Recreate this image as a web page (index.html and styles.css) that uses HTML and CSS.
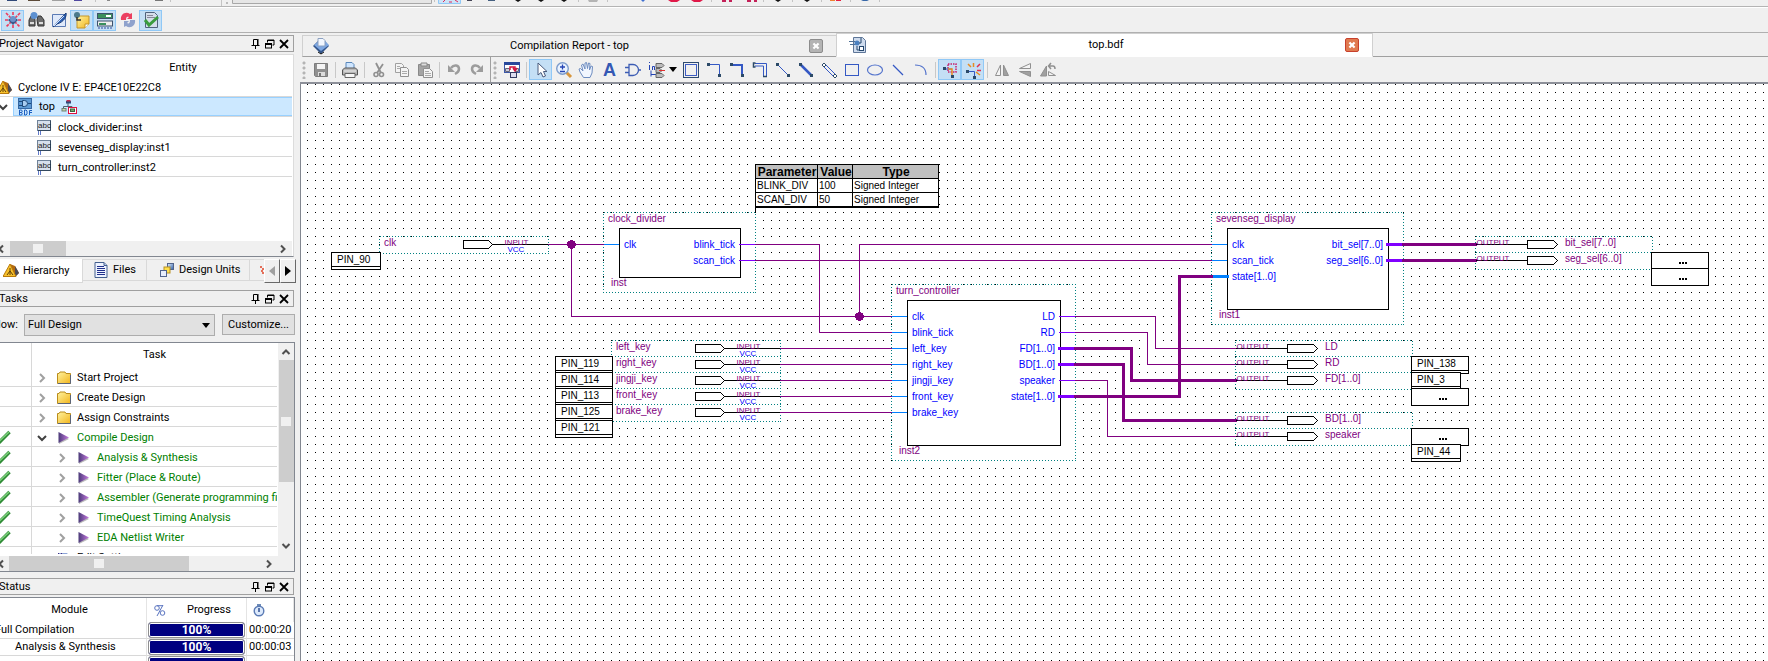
FILE: index.html
```
<!DOCTYPE html>
<html lang="en">
<head>
<meta charset="utf-8">
<title>top.bdf</title>
<link rel="stylesheet" href="styles.css">
</head>
<body>
<svg class="defs" aria-hidden="true">
  <defs>
    <linearGradient id="gold" x1="0" y1="0" x2="1" y2="1"><stop offset="0" stop-color="#fff3a0"/><stop offset="1" stop-color="#f2b51c"/></linearGradient>
    <linearGradient id="violet" x1="0" y1="0" x2="1" y2="0"><stop offset="0" stop-color="#4a3a78"/><stop offset="1" stop-color="#c77be0"/></linearGradient>
    <linearGradient id="steel" x1="0" y1="0" x2="1" y2="1"><stop offset="0" stop-color="#e4f0ff"/><stop offset="1" stop-color="#2f5fa8"/></linearGradient>
  </defs>
  <symbol id="i-folder" viewBox="0 0 16 16"><path d="M1.500 13.500V3.500H3L4 2h5l1 1.500h4.500v10z" fill="url(#gold)" stroke="#b98c1c"/><path d="M2 13.500h12.500V5" fill="none" stroke="#5b6478"/></symbol>
  <symbol id="i-play" viewBox="0 0 16 16"><path d="M3 3v11l10-5z" fill="#bbb"/><path d="M2.500 2v11L13 7.500z" fill="url(#violet)"/></symbol>
  <symbol id="i-check" viewBox="0 0 16 16"><path d="M1 9l4 3.500L14.500 3" fill="none" stroke="#2f8a35" stroke-width="3.500"/><path d="M1.500 8.500l3.500 3L14 3" fill="none" stroke="#7cd07c" stroke-width="1.500"/></symbol>
  <symbol id="i-closed" viewBox="0 0 10 10"><path d="M3 1l4 4-4 4" fill="none" stroke="#a0a0a0" stroke-width="2"/></symbol>
  <symbol id="i-open" viewBox="0 0 10 10"><path d="M1 3l4 4 4-4" fill="none" stroke="#404040" stroke-width="2"/></symbol>
  <symbol id="i-left" viewBox="0 0 10 10"><path d="M7 1.500L3.500 5 7 8.500" fill="none" stroke="#505050" stroke-width="2"/></symbol>
  <symbol id="i-right" viewBox="0 0 10 10"><path d="M3 1.500L6.500 5 3 8.500" fill="none" stroke="#505050" stroke-width="2"/></symbol>
  <symbol id="i-up" viewBox="0 0 10 10"><path d="M1.500 7L5 3.500 8.500 7" fill="none" stroke="#505050" stroke-width="2"/></symbol>
  <symbol id="i-down" viewBox="0 0 10 10"><path d="M1.500 3L5 6.500 8.500 3" fill="none" stroke="#505050" stroke-width="2"/></symbol>
  <symbol id="i-device" viewBox="0 0 16 16"><path d="M7 1l5 2 4 7-4 4z" fill="#b36a10"/><path d="M12 3l4 7-4 4z" fill="#4a4a58"/><path d="M7 1l6 12.500H0z" fill="#f7c12c" stroke="#b87a0c"/><path d="M7 5v7M7 8l-3 4M7 8l3 4" stroke="#604008" fill="none"/></symbol>
  <symbol id="i-bdf" viewBox="0 0 16 18"><rect x="1.500" y=".5" width="13" height="10" fill="#5d9ad4" stroke="#3568a4"/><path d="M2 3.500h3M2 7.500h3M11 5.500h3M5.500 2.500h2a3 3 0 0 1 0 6h-2z" fill="#a9cdf0" stroke="#1d4878"/><path d="M2.500 12v5h1.500a1.200 1.200 0 0 0 0-2.500H3h1a1.200 1.200 0 0 0 0-2.500zM7.500 12v5H9l1-1v-3l-1-1zM15 12.500h-2.500V17M12.500 14.500H15" fill="none" stroke="#1c5fc0"/></symbol>
  <symbol id="i-tree" viewBox="0 0 16 16"><path d="M7 4v3M2.500 10V7.500H11V10" fill="none" stroke="#506070"/><rect x="5" y="2" width="5" height="2.500" fill="#304878"/><rect x="5.500" y="1" width="4" height="1.500" fill="#c03050"/><rect x="1" y="9.500" width="4" height="2.500" fill="#c8d8b0" stroke="#708070"/><rect x="7.500" y="8.500" width="8" height="6" fill="#fff" stroke="#e01040"/><rect x="9.500" y="10" width="4" height="2.500" fill="#70b070" stroke="#406040"/></symbol>
  <symbol id="i-abc" viewBox="0 0 16 18"><rect x="1.500" y="1.500" width="13" height="10" fill="#d7e0ec" stroke="#6f8298"/><path d="M14.500 1.500v10H2" fill="none" stroke="#33485e"/><text x="2" y="9" class="abc">abc</text><path d="M2.500 12v4M4.500 12v4" stroke="#6078c8"/></symbol>
  <symbol id="i-doc" viewBox="0 0 16 16"><path d="M2 .5h9l3 3v12H2z" fill="#eef3ff" stroke="#44608f"/><path d="M4 4.500h7M4 6.500h8M4 8.500h8M4 10.500h8M4 12.500h8" stroke="#20308c"/><path d="M11 .5v3h3" fill="#b7c7e6" stroke="#44608f"/></symbol>
  <symbol id="i-units" viewBox="0 0 16 16"><rect x="8.500" y="1.500" width="6" height="6" fill="url(#steel)" stroke="#52648c"/><rect x="5" y="5" width="6" height="6" fill="#ffe04c" stroke="#b89020"/><rect x="1.500" y="8.500" width="6" height="6" fill="#e8eefc" stroke="#52648c"/></symbol>
  <symbol id="i-ip" viewBox="0 0 4 8"><path d="M0 1h2M2 3h2M1 5h2M2 7h2" stroke="#e04428" stroke-width="1.500"/></symbol>
  <symbol id="i-pin" viewBox="0 0 10 10"><path d="M2.500 6V.5h4V6M7 0v6M.5 6.500h8M4.500 7v3" fill="none" stroke="#000"/></symbol>
  <symbol id="i-float" viewBox="0 0 10 10"><path d="M2.500 3.500V1h6.500v5H7.500M2.500 1.500H9" fill="none" stroke="#000"/><rect x=".5" y="4.500" width="6" height="4.500" fill="#f0f0f0" stroke="#000"/><path d="M0 5h7" stroke="#000" stroke-width="2"/></symbol>
  <symbol id="i-x" viewBox="0 0 10 10"><path d="M1 1l8 8M9 1L1 9" fill="none" stroke="#000" stroke-width="1.800"/></symbol>
  <symbol id="i-clock" viewBox="0 0 12 14"><path d="M4 1h4v2H4z" fill="#6f8cb8"/><circle cx="6" cy="8" r="4.800" fill="#dce9fb" stroke="#5a7ab4" stroke-width="1.400"/><path d="M6 5v4" stroke="#2c4c90" stroke-width="1.500"/></symbol>
  <symbol id="i-percent" viewBox="0 0 14 14"><path d="M10 2L4 13" stroke="#5a74c0" fill="none"/><circle cx="4" cy="5" r="2.300" fill="none" stroke="#5a74c0"/><circle cx="9.500" cy="10" r="2.300" fill="none" stroke="#5a74c0"/><path d="M4 2.700h6" stroke="#5a74c0"/></symbol>
</svg>

<div class="strip" aria-hidden="true">
  <svg width="800" height="6" viewBox="0 0 800 6">
    <path d="M221.500 0v6M95.500 0v2M170.500 0v2M434.500 0v2M578.500 0v2M607.500 0v2M711.500 0v2M763.500 0v2M792.500 0v2" stroke="#c4c4c4"/>
    <rect x="7" width="10" height="1" fill="#304878"/><rect x="28" width="12" height="1" fill="#5c4a38"/><rect x="52" width="13" height="1" fill="#a0a0a0"/><rect x="74" width="8" height="1" fill="#5048a0"/><rect x="107" width="3" height="1" fill="#888"/><rect x="155" width="8" height="1" fill="#777"/><rect x="226" y="2" width="2" height="2" fill="#bbb"/>
    <path d="M232.500 0v3.500h199V0" fill="#e6e6e6" stroke="#a8a8a8"/>
    <path d="M438.500 0v3.500h22V0" fill="#cce4f7" stroke="#90c8f6"/>
    <path d="M443 2l2-2M455 0l3 2M449 2h3" stroke="#e02858"/>
    <rect x="467" width="5" height="1" fill="#445"/><rect x="488" width="7" height="1" fill="#456080"/>
    <path d="M515 0h6l-3 2zM538 0h6l-3 2zM561 0h6l-3 2zM775 0h6l-3 2z" fill="#111"/>
    <path d="M588 0h10l-1 2h-8z" fill="#b4b4b4"/><path d="M641 0h4l-2 2z" fill="#4070d0"/><path d="M668 0h12l-3 2h-6zM691 0h12l-3 2h-6z" fill="#e01848"/>
    <path d="M722 0h4v2h-4zM729 0h3v2h-3zM747 0h4v2h-4zM754 0h3v2h-3z" fill="#c42058"/>
  </svg>
  <svg width="100" height="6" viewBox="0 0 100 6"><path d="M4 0h6L7 2z" fill="#111"/><path d="M21.500 0v2M50.500 0v2M79.500 0v2" stroke="#c4c4c4"/><path d="M30 0h5v1h-5z" fill="#f08030"/><path d="M36 0h5v1h-5z" fill="#e82040"/><path d="M61 0h8l-2 1h-4z" fill="#3868a8"/></svg>
</div>

<div class="quickbar" role="toolbar" aria-label="Tools">
  <button class="tool on" aria-label="Chip planner"><svg width="18" height="18" viewBox="0 0 18 18"><path d="M2 2l14 14M16 2L2 16M9 1v3M9 14v3M1 9h3M14 9h3" stroke="#ee3a5c" stroke-width="1.600" stroke-dasharray="3 1"/><path d="M4 9l5-4 5 4-5 5z" fill="#39598c"/><circle cx="9" cy="8" r="3" fill="#6d93cc"/></svg></button>
  <button class="tool" aria-label="Find"><svg width="18" height="18" viewBox="0 0 18 18"><path d="M2 9l2-4h3l1 4v6H2zM10 9l1-4h3l3 4v6h-6z" fill="#6c6c6c" stroke="#333"/><path d="M3 12h4M12 12h4" stroke="#ddd" stroke-width="2"/><circle cx="7" cy="4.500" r="3.500" fill="#5d90d0"/></svg></button>
  <button class="tool" aria-label="Assignment editor"><svg width="18" height="18" viewBox="0 0 18 18"><path d="M2.500 3.500h13v12h-13z" fill="#dfe9fa" stroke="#5a7ab4"/><path d="M3 16L16 2c1 3-2 9-9 11z" fill="#2e62b4" stroke="#1c3d78"/><path d="M4 15L14 5" stroke="#cfe2ff"/></svg></button>
  <button class="tool on" aria-label="Notes"><svg width="18" height="18" viewBox="0 0 18 18"><path d="M4 5h12v8l-4 4H4z" fill="url(#gold)" stroke="#c2952a"/><path d="M16 13h-4v4" fill="#fff" stroke="#c2952a"/><circle cx="4" cy="4" r="3" fill="#4a7a8c"/><path d="M4 6v3h4" fill="none" stroke="#333" stroke-width="1.500"/></svg></button>
  <button class="tool on" aria-label="Tasks"><svg width="18" height="18" viewBox="0 0 18 18"><rect x="1.500" y="2.500" width="15" height="5" fill="#3a8f5c" stroke="#3c506c"/><rect x="1.500" y="10" width="15" height="5" fill="#eee" stroke="#3c506c"/><path d="M10 4h5v2h-5z" fill="#fff"/><path d="M3 12h7v2H3z" fill="#3a8f5c"/><path d="M2 17h14" stroke="#334a9c" stroke-dasharray="2 1"/></svg></button>
  <button class="tool" aria-label="Refresh"><svg width="18" height="18" viewBox="0 0 18 18"><path d="M2 9c-1-6 5-9 9-6l2-1v6H8l2-2C8 5 7 6 7 9z" fill="#ec4060"/><path d="M16 9c1 6-5 9-9 6l-2 1v-6h5l-2 2c2 1 3 0 3-3z" fill="#8fa2cc"/></svg></button>
  <button class="tool on" aria-label="Messages"><svg width="18" height="18" viewBox="0 0 18 18"><path d="M3.500 1.500h9l3 3v12h-12z" fill="#d4deea" stroke="#50627c"/><path d="M5 4.500h6M5 6.500h8" stroke="#889"/><path d="M3 9l4 5 9-8" fill="none" stroke="#3a9c3e" stroke-width="3"/></svg></button>
</div>

<main class="main">
  <aside class="side">
    <div class="dock-title"><span>Project Navigator</span><span class="dock-icons"><svg><use href="#i-pin"/></svg><svg><use href="#i-float"/></svg><svg><use href="#i-x"/></svg></span></div>
    <section class="nav-pane">
      <div class="nav-head">Entity</div>
      <ul class="nav-list">
        <li><svg class="ic dev"><use href="#i-device"/></svg>Cyclone IV E: EP4CE10E22C8</li>
        <li class="top-row"><svg class="chev"><use href="#i-open"/></svg><div class="picked"><svg class="ic tall"><use href="#i-bdf"/></svg><span>top</span><svg class="ic"><use href="#i-tree"/></svg></div></li>
        <li class="leaf"><svg class="ic tall"><use href="#i-abc"/></svg>clock_divider:inst</li>
        <li class="leaf"><svg class="ic tall"><use href="#i-abc"/></svg>sevenseg_display:inst1</li>
        <li class="leaf"><svg class="ic tall"><use href="#i-abc"/></svg>turn_controller:inst2</li>
      </ul>
      <div class="hscroll nav-scroll"><svg><use href="#i-left"/></svg><i class="thumb"><b></b></i><svg class="end"><use href="#i-right"/></svg></div>
    </section>
    <div class="nav-tabs">
      <button class="nav-tab current"><svg class="ic"><use href="#i-device"/></svg>Hierarchy</button>
      <button class="nav-tab files"><svg class="ic"><use href="#i-doc"/></svg>Files</button>
      <button class="nav-tab units"><svg class="ic"><use href="#i-units"/></svg>Design Units</button>
      <span class="nav-tab cut"><svg width="4" height="8"><use href="#i-ip"/></svg></span>
      <button class="nudge" aria-label="Previous tab"><svg width="6" height="10" viewBox="0 0 6 10"><path d="M6 0v10L0 5z" fill="#a0a0a0"/></svg></button>
      <button class="nudge" aria-label="Next tab"><svg width="6" height="10" viewBox="0 0 6 10"><path d="M0 0v10l6-5z" fill="#000"/></svg></button>
    </div>

    <div class="dock-title"><span>Tasks</span><span class="dock-icons"><svg><use href="#i-pin"/></svg><svg><use href="#i-float"/></svg><svg><use href="#i-x"/></svg></span></div>
    <div class="flow-row">
      <label for="flow">Flow:</label>
      <span class="combo"><select id="flow"><option>Full Design</option></select><svg width="8" height="5" viewBox="0 0 8 5"><path d="M0 0h8L4 5z"/></svg></span>
      <button class="customize">Customize...</button>
    </div>
    <section class="task-pane">
      <div class="task-view">
        <table class="tasks">
          <thead><tr><th class="mark"></th><th>Task</th></tr></thead>
          <tbody>
            <tr><td class="mark"></td><td><div class="task"><svg class="chev"><use href="#i-closed"/></svg><svg class="ic"><use href="#i-folder"/></svg>Start Project</div></td></tr>
            <tr><td class="mark"></td><td><div class="task"><svg class="chev"><use href="#i-closed"/></svg><svg class="ic"><use href="#i-folder"/></svg>Create Design</div></td></tr>
            <tr><td class="mark"></td><td><div class="task"><svg class="chev"><use href="#i-closed"/></svg><svg class="ic"><use href="#i-folder"/></svg>Assign Constraints</div></td></tr>
            <tr class="done"><td class="mark"><svg class="ic"><use href="#i-check"/></svg></td><td><div class="task"><svg class="chev"><use href="#i-open"/></svg><svg class="ic"><use href="#i-play"/></svg>Compile Design</div></td></tr>
            <tr class="done"><td class="mark"><svg class="ic"><use href="#i-check"/></svg></td><td><div class="task sub"><svg class="chev"><use href="#i-closed"/></svg><svg class="ic"><use href="#i-play"/></svg>Analysis &amp; Synthesis</div></td></tr>
            <tr class="done"><td class="mark"><svg class="ic"><use href="#i-check"/></svg></td><td><div class="task sub"><svg class="chev"><use href="#i-closed"/></svg><svg class="ic"><use href="#i-play"/></svg>Fitter (Place &amp; Route)</div></td></tr>
            <tr class="done"><td class="mark"><svg class="ic"><use href="#i-check"/></svg></td><td><div class="task sub"><svg class="chev"><use href="#i-closed"/></svg><svg class="ic"><use href="#i-play"/></svg>Assembler (Generate programming files)</div></td></tr>
            <tr class="done"><td class="mark"><svg class="ic"><use href="#i-check"/></svg></td><td><div class="task sub"><svg class="chev"><use href="#i-closed"/></svg><svg class="ic"><use href="#i-play"/></svg>TimeQuest Timing Analysis</div></td></tr>
            <tr class="done"><td class="mark"><svg class="ic"><use href="#i-check"/></svg></td><td><div class="task sub"><svg class="chev"><use href="#i-closed"/></svg><svg class="ic"><use href="#i-play"/></svg>EDA Netlist Writer</div></td></tr>
            <tr><td class="mark"></td><td><div class="task edit"><svg class="ic" viewBox="0 0 16 16"><path d="M2 3h9l4 5v8H2z" fill="#8ea6d8"/><path d="M2.500 3v9M5.500 3v9M8.500 4l3 8" stroke="#402c80"/></svg>Edit Settings</div></td></tr>
          </tbody>
        </table>
      </div>
      <div class="vscroll"><svg><use href="#i-up"/></svg><i class="thumb"><b></b></i><svg class="end"><use href="#i-down"/></svg></div>
      <div class="hscroll task-scroll"><svg><use href="#i-left"/></svg><i class="thumb"><b></b></i><svg class="end"><use href="#i-right"/></svg></div>
    </section>

    <div class="dock-title"><span>Status</span><span class="dock-icons"><svg><use href="#i-pin"/></svg><svg><use href="#i-float"/></svg><svg><use href="#i-x"/></svg></span></div>
    <section class="status-pane">
      <table class="status">
        <thead><tr><th class="module">Module</th><th class="progress"><div><svg width="14" height="14"><use href="#i-percent"/></svg><span>Progress</span></div></th><th class="time"><div><svg width="12" height="14"><use href="#i-clock"/></svg></div></th></tr></thead>
        <tbody>
          <tr><td>Full Compilation</td><td class="progress"><div class="bar">100%</div></td><td>00:00:20</td></tr>
          <tr><td class="inner">Analysis &amp; Synthesis</td><td class="progress"><div class="bar">100%</div></td><td>00:00:03</td></tr>
          <tr><td></td><td class="progress"><div class="bar"></div></td><td></td></tr>
        </tbody>
      </table>
    </section>
  </aside>

  <section class="work">
    <div class="doc-tabs" role="tablist">
      <div class="doc-tab" role="tab"><svg class="doc-ic" viewBox="0 0 18 18"><path d="M9 17L1 9l5-5h7l4 5z" fill="#34568c"/><path d="M9 14L2 8l5-4h6l4 4z" fill="#7da7e2"/><path d="M6 1.500h5l2 2V9H6z" fill="#f2f7ff" stroke="#8ba0c0"/><path d="M6 15l3 2 3-2" stroke="#111" fill="none"/></svg><span>Compilation Report - top</span><button class="close" aria-label="Close"><svg viewBox="0 0 14 14"><path d="M4 4l6 6M10 4l-6 6" stroke="#fff" stroke-width="2.500"/></svg></button></div>
      <div class="doc-tab active" role="tab"><svg class="doc-ic" viewBox="0 0 18 18"><path d="M4.500 1.500h9l3 3v12h-12z" fill="#cfdcee" stroke="#5e7698"/><path d="M0 5.500h6M1 8.500h5" stroke="#4e7096"/><circle cx="8" cy="7" r="2.500" fill="#4a80c0"/><path d="M10 7h2V2M8 10v4h3" fill="none" stroke="#24466c"/><rect x="10.500" y="10.500" width="4" height="4" fill="#fff" stroke="#24466c"/></svg><span>top.bdf</span><button class="close" aria-label="Close"><svg viewBox="0 0 14 14"><path d="M4 4l6 6M10 4l-6 6" stroke="#fff" stroke-width="2.500"/></svg></button></div>
      <div class="doc-rest"></div>
    </div>

    <div class="editbar" role="toolbar" aria-label="Drawing tools">
      <i class="grip"></i>
      <button class="tool" aria-label="Save"><svg width="16" height="16" viewBox="0 0 16 16"><path d="M1.500 1.500h13v13h-12l-1-1z" fill="#909090" stroke="#7c7c7c"/><path d="M4 2h8v5H4z" fill="#f4f4f4"/><path d="M5 10h7v4H5z" fill="#ddd"/><path d="M6 11h2v3H6z" fill="#777"/></svg></button>
      <i class="sep"></i>
      <button class="tool" aria-label="Print"><svg width="18" height="18" viewBox="0 0 18 18"><path d="M5 8V1.500h6l2 2V8" fill="#cfe6ff" stroke="#5a88bc"/><path d="M1.500 9l2-2h11l2 2v5h-15z" fill="#b8b8b8" stroke="#555"/><path d="M4 12.500h10v4H4z" fill="#f6f6f6" stroke="#666"/><path d="M3 10h12" stroke="#eee"/></svg></button>
      <i class="sep"></i>
      <button class="tool" aria-label="Cut"><svg width="16" height="16" viewBox="0 0 16 16"><path d="M5 1l5 10M12 2L6 11" stroke="#909090" stroke-width="1.800"/><circle cx="5" cy="12.500" r="2" fill="none" stroke="#909090" stroke-width="1.600"/><circle cx="10.500" cy="12.500" r="2" fill="none" stroke="#909090" stroke-width="1.600"/></svg></button>
      <button class="tool" aria-label="Copy"><svg width="16" height="16" viewBox="0 0 16 16"><path d="M1.500 1.500h6l2 2v7h-8z" fill="#f4f4f4" stroke="#a0a0a0"/><path d="M6.500 5.500h6l2 2v7h-8z" fill="#f4f4f4" stroke="#909090"/><path d="M3 4.500h3M3 6.500h3M8 9.500h5M8 11.500h5" stroke="#aaa"/></svg></button>
      <button class="tool" aria-label="Paste"><svg width="16" height="16" viewBox="0 0 16 16"><path d="M1.500 2.500h11v11h-11z" fill="#a4a4a4" stroke="#888"/><path d="M4 1h6v3H4z" fill="#ddd" stroke="#888"/><path d="M6.500 6.500h6l3 3v6h-9z" fill="#f4f4f4" stroke="#909090"/><path d="M8 9.500h4M8 11.500h6M8 13.500h6" stroke="#aaa"/></svg></button>
      <i class="sep"></i>
      <button class="tool" aria-label="Undo"><svg width="16" height="16" viewBox="0 0 16 16"><path d="M5 6c3-4 8-3 8 1 0 3-2 4-4 5" fill="none" stroke="#9c9c9c" stroke-width="2.500"/><path d="M2 3v7h7z" fill="#9c9c9c"/></svg></button>
      <button class="tool" aria-label="Redo"><svg width="16" height="16" viewBox="0 0 16 16"><path d="M11 6C8 2 3 3 3 7c0 3 2 4 4 5" fill="none" stroke="#9c9c9c" stroke-width="2.500"/><path d="M14 3v7H7z" fill="#9c9c9c"/></svg></button>
      <i class="divider"></i>
      <i class="grip"></i>
      <button class="tool" aria-label="Detach window"><svg width="18" height="18" viewBox="0 0 18 18"><rect x="1.500" y="1.500" width="15" height="10" fill="#fff" stroke="#3c58a8"/><path d="M1 2.500h16" stroke="#28489c" stroke-width="3"/><path d="M2.500 7.500h4v3h-4zM12.500 7.500h3v3h-3z" fill="#ccd" stroke="#667"/><path d="M7 9V6h5v3M10 7l2 3 2-3" fill="none" stroke="#d01840" stroke-width="1.500"/><rect x="7.500" y="11.500" width="6" height="5" fill="#dde" stroke="#333a60"/></svg></button>
      <i class="sep"></i>
      <button class="tool on" aria-label="Select"><svg width="16" height="18" viewBox="0 0 16 18"><path d="M5 2v12l3-2.500 2 4.500 2.500-1-2-4.500H14z" fill="#fff" stroke="#4a5a7c"/></svg></button>
      <button class="tool" aria-label="Zoom"><svg width="18" height="18" viewBox="0 0 18 18"><path d="M11 11l5 5" stroke="#d8963c" stroke-width="3"/><circle cx="7.500" cy="7.500" r="5.800" fill="#eaf3ff" stroke="#7c9ccc" stroke-width="1.400"/><path d="M7.500 3.500v5M5 6h5M5 10.500h5" stroke="#2444b4" stroke-width="1.300"/></svg></button>
      <button class="tool" aria-label="Hand"><svg width="18" height="18" viewBox="0 0 18 18"><path d="M5.500 16.500L2 11 1 8l1.500-.5L5 10 3.500 4l1.500-1 2 5V2l1.500-.5 1 6 1-5.500 1.500.5-.5 6.500L13 5l1.500.5L14 12l-2 4.500z" fill="#f1f6ff" stroke="#6d8cc0"/></svg></button>
      <button class="tool glyph" aria-label="Text">A</button>
      <button class="tool" aria-label="Symbol"><svg width="18" height="18" viewBox="0 0 18 18"><path d="M1 6.500h4M1 11.500h4M14 9h3M5 3.500h4a5.500 5.500 0 0 1 0 11H5z" fill="none" stroke="#3c5cb4" stroke-width="1.300"/></svg></button>
      <button class="tool" aria-label="Pins"><svg width="18" height="18" viewBox="0 0 18 18"><path d="M2.500 4v5M5.500 9V5.500h2V9M2.500 1v1M4 13.500h6M4 9.500v6" fill="none" stroke="#2444b4"/><path d="M9 2.500h6l2 2-2 2H9zM9 7.500h4l2 2-2 2H9zM9 12.500h6l2 2-2 2H9z" fill="#bbb" stroke="#666"/><path d="M12 9.500h6" stroke="#e03030"/></svg></button>
      <button class="more" aria-label="More pins"><svg width="8" height="5" viewBox="0 0 8 5"><path d="M0 0h8L4 5z"/></svg></button>
      <button class="tool" aria-label="Block"><svg width="18" height="18" viewBox="0 0 18 18"><rect x="1.500" y="1.500" width="15" height="15" fill="none" stroke="#2c4a70"/><rect x="3.500" y="3.500" width="11" height="11" fill="none" stroke="#3c5cc4"/></svg></button>
      <button class="tool" aria-label="Node"><svg width="18" height="18" viewBox="0 0 18 18"><path d="M3 3.500h11.500V15" fill="none" stroke="#3458c4"/><path d="M2 2h3v3H2zM13 13h3v3h-3z" fill="#2c4a68"/></svg></button>
      <button class="tool" aria-label="Bus"><svg width="18" height="18" viewBox="0 0 18 18"><path d="M3 4h11v11" fill="none" stroke="#3458c4" stroke-width="2"/><path d="M2 2h3v3H2zM13 13h3v3h-3z" fill="#2c4a68"/></svg></button>
      <button class="tool" aria-label="Conduit"><svg width="18" height="18" viewBox="0 0 18 18"><path d="M4 2.500h11.500V15M4 5h8.500v10" fill="none" stroke="#3458c4"/><path d="M4.500 2h-2v4h2M12 15.500h4" fill="none" stroke="#2c4a68" stroke-width="1.500"/></svg></button>
      <button class="tool" aria-label="Diagonal node"><svg width="18" height="18" viewBox="0 0 18 18"><path d="M3 3l12 12" stroke="#3458c4"/><path d="M2 2h3v3H2zM13 13h3v3h-3z" fill="#2c4a68"/></svg></button>
      <button class="tool" aria-label="Diagonal bus"><svg width="18" height="18" viewBox="0 0 18 18"><path d="M3 3l12 12" stroke="#3458c4" stroke-width="2.500"/><path d="M2 2h3v3H2zM13 13h3v3h-3z" fill="#2c4a68"/></svg></button>
      <button class="tool" aria-label="Diagonal conduit"><svg width="18" height="18" viewBox="0 0 18 18"><path d="M3 5l11 11M5 3l11 11" stroke="#3458c4"/><path d="M2 4l2-2 2 2-2 2zM13 15l2-2 2 2-2 2z" fill="#fff" stroke="#2c4a68"/></svg></button>
      <button class="tool" aria-label="Rectangle"><svg width="18" height="18" viewBox="0 0 18 18"><rect x="2.500" y="3.500" width="13" height="11" fill="none" stroke="#3458c4"/></svg></button>
      <button class="tool" aria-label="Oval"><svg width="18" height="18" viewBox="0 0 18 18"><ellipse cx="9" cy="9" rx="7.500" ry="5" fill="none" stroke="#5474cc" stroke-width="1.200"/></svg></button>
      <button class="tool" aria-label="Line"><svg width="18" height="18" viewBox="0 0 18 18"><path d="M4 4l10 10" stroke="#3458c4" stroke-width="1.300"/></svg></button>
      <button class="tool" aria-label="Arc"><svg width="18" height="18" viewBox="0 0 18 18"><path d="M3 4c7 0 11 3 11 10" fill="none" stroke="#5474cc" stroke-width="1.200"/></svg></button>
      <i class="sep"></i>
      <button class="tool on" aria-label="Partial line selection"><svg width="18" height="18" viewBox="0 0 18 18"><rect x="7" y="3" width="8" height="8" fill="none" stroke="#c8206c" stroke-width="1.500" stroke-dasharray="1.500 1"/><path d="M3 8h8" stroke="#3458c4"/><path d="M7 8h4v8" fill="none" stroke="#e88c20" stroke-width="1.500"/><path d="M2 6h3v3H2zM10 14h3v3h-3z" fill="#2c4a68"/></svg></button>
      <button class="tool on" aria-label="Rubberbanding"><svg width="18" height="18" viewBox="0 0 18 18"><path d="M3 10.500h7.500V16" fill="none" stroke="#3458c4"/><path d="M4 3l3 3M9.500 2v4M12 11l4 3" stroke="#e88c20" stroke-width="1.500"/><path d="M16 3l-3 3M13 9.500h4" stroke="#e03050" stroke-width="1.500"/><path d="M2 9h3v3H2zM9 15h3v3H9z" fill="#2c4a68"/></svg></button>
      <i class="sep"></i>
      <button class="tool" aria-label="Flip horizontal"><svg width="16" height="16" viewBox="0 0 16 16"><path d="M6.500 3v10.500h-5z" fill="#f4f4f4" stroke="#909090"/><path d="M9.500 3v10.500h5z" fill="#a0a0a0" stroke="#909090"/></svg></button>
      <button class="tool" aria-label="Flip vertical"><svg width="16" height="16" viewBox="0 0 16 16"><path d="M13.500 1.500v5h-11z" fill="#f4f4f4" stroke="#909090"/><path d="M13.500 14.500v-5h-11z" fill="#a0a0a0" stroke="#909090"/></svg></button>
      <button class="tool" aria-label="Rotate left"><svg width="18" height="16" viewBox="0 0 18 16"><path d="M7.500 4v10h-6z" fill="#a0a0a0" stroke="#909090"/><path d="M9.500 9.500v4h7z" fill="#f4f4f4" stroke="#909090"/><path d="M10 4h4q2 0 2 3M12 1L9.500 4 12 7" fill="none" stroke="#909090" stroke-width="1.500"/></svg></button>
    </div>

    <div class="canvas">
      <svg class="schematic" role="img" aria-label="Block diagram top.bdf">
        <defs>
          <pattern id="dots" x="307" y="84" width="8" height="8" patternUnits="userSpaceOnUse"><rect width="1" height="1" fill="#000"/></pattern>
          <symbol id="in-pin" overflow="visible"><path d="M0 0H25L29 4 25 8H0z" class="shape"/><path d="M29 4H84" class="ink"/><text x="41" y="4" class="tiny">INPUT</text><text x="44" y="11" class="tiny vcc">VCC</text></symbol>
          <symbol id="out-pin" overflow="visible"><path d="M0 4H52" class="ink"/><path d="M52 0H78L82 4 78 8H52z" class="shape"/><text x="1" y="4" class="tiny">OUTPUT</text></symbol>
          <symbol id="tag" overflow="visible"><path d="M0 0H57V17H0zM0 14H57" class="shape"/></symbol>
          <symbol id="tag-s" overflow="visible"><path d="M0 0H49V17H0zM0 14H49" class="shape"/></symbol>
          <symbol id="tag-w" overflow="visible"><path d="M0 0H57V17H0z" class="shape"/><path d="M27 9h2v2h-2zM30 9h2v2h-2zM33 9h2v2h-2z"/></symbol>
        </defs>
        <g transform="translate(-301 -84)">
          <rect x="301" y="84" width="100%" height="100%" fill="url(#dots)"/>

          <g class="bound">
            <path d="M379.500 236.500h169v17h-169z"/>
            <path d="M603.500 212.500h152v80h-152z"/>
            <path d="M891.500 284.500h184v176h-184z"/>
            <path d="M1211.500 212.500h192v112h-192z"/>
            <path d="M611.500 340.500h169v81h-169zM611.500 356.500h169M611.500 372.500h169M611.500 388.500h169M611.500 404.500h169"/>
            <path d="M1235.500 340.500h177v49h-177zM1235.500 356.500h177M1235.500 372.500h177"/>
            <path d="M1235.500 412.500h177v33h-177zM1235.500 428.500h177"/>
            <path d="M1475.500 236.500h177v33h-177zM1475.500 252.500h177"/>
          </g>

          <g class="wire">
            <path d="M547 244.500H604M571.500 244.500V316.500H892"/>
            <path d="M755 244.500H819.500V332.500H892"/>
            <path d="M755 260.500H1212M859.500 316.500V244.500H1212"/>
            <path d="M779 348.500H892M779 364.500H892M779 380.500H892M779 396.500H892M779 412.500H892"/>
            <path d="M1075 316.500H1155.500V348.500H1236M1075 332.500H1147.500V364.500H1236M1075 380.500H1107.500V436.500H1236"/>
          </g>
          <circle cx="571.500" cy="244.500" r="4.500" class="joint"/><circle cx="859.500" cy="316.500" r="4.500" class="joint"/>

          <g class="box">
            <path d="M619.500 228.500h121v49h-121z"/>
            <path d="M907.500 300.500h153v145h-153z"/>
            <path d="M1227.500 228.500h161v81h-161z"/>
          </g>
          <path class="wire bus" d="M1074 348.500H1131.500V380.500H1237M1074 364.500H1123.500V420.500H1237M1074 396.500H1179.500V276.500H1213M1402 244.500H1477M1402 260.500H1477"/>
          <path class="port-in" d="M604 244.500H619M892 316.500H907M892 332.500H907M892 348.500H907M892 364.500H907M892 380.500H907M892 396.500H907M892 412.500H907M1212 244.500H1227M1212 260.500H1227"/>
          <path class="port-in bus" d="M1213 276.500H1229"/>
          <path class="port-out" d="M739 244.500H755M739 260.500H755M1059 316.500H1075M1059 332.500H1075M1059 380.500H1075"/>
          <path class="port-out bus" d="M1058 348.500H1074M1058 364.500H1074M1058 396.500H1074M1386 244.500H1402M1386 260.500H1402"/>

          <use href="#in-pin" x="463.500" y="240.500"/>
          <use href="#in-pin" x="695.500" y="344.500"/><use href="#in-pin" x="695.500" y="360.500"/><use href="#in-pin" x="695.500" y="376.500"/><use href="#in-pin" x="695.500" y="392.500"/><use href="#in-pin" x="695.500" y="408.500"/>
          <use href="#out-pin" x="1235.500" y="344.500"/><use href="#out-pin" x="1235.500" y="360.500"/><use href="#out-pin" x="1235.500" y="376.500"/><use href="#out-pin" x="1235.500" y="416.500"/><use href="#out-pin" x="1235.500" y="432.500"/>
          <use href="#out-pin" x="1475.500" y="240.500"/><use href="#out-pin" x="1475.500" y="256.500"/>

          <g class="name">
            <text x="384" y="246">clk</text>
            <text x="608" y="222">clock_divider</text><text x="611" y="286">inst</text>
            <text x="896" y="294">turn_controller</text><text x="899" y="454">inst2</text>
            <text x="1216" y="222">sevenseg_display</text><text x="1219" y="318">inst1</text>
            <text x="616" y="350">left_key</text><text x="616" y="366">right_key</text><text x="616" y="382">jingji_key</text><text x="616" y="398">front_key</text><text x="616" y="414">brake_key</text>
            <text x="1325" y="350">LD</text><text x="1325" y="366">RD</text><text x="1325" y="382">FD[1..0]</text><text x="1325" y="422">BD[1..0]</text><text x="1325" y="438">speaker</text>
            <text x="1565" y="246">bit_sel[7..0]</text><text x="1565" y="262">seg_sel[6..0]</text>
          </g>
          <g class="port">
            <text x="624" y="248">clk</text>
            <text x="912" y="320">clk</text><text x="912" y="336">blink_tick</text><text x="912" y="352">left_key</text><text x="912" y="368">right_key</text><text x="912" y="384">jingji_key</text><text x="912" y="400">front_key</text><text x="912" y="416">brake_key</text>
            <text x="1232" y="248">clk</text><text x="1232" y="264">scan_tick</text><text x="1232" y="280">state[1..0]</text>
          </g>
          <g class="port right">
            <text x="735" y="248">blink_tick</text><text x="735" y="264">scan_tick</text>
            <text x="1055" y="320">LD</text><text x="1055" y="336">RD</text><text x="1055" y="352">FD[1..0]</text><text x="1055" y="368">BD[1..0]</text><text x="1055" y="384">speaker</text><text x="1055" y="400">state[1..0]</text>
            <text x="1383" y="248">bit_sel[7..0]</text><text x="1383" y="264">seg_sel[6..0]</text>
          </g>

          <use href="#tag-s" x="331.500" y="252.500"/>
          <use href="#tag" x="555.500" y="356.500"/><use href="#tag" x="555.500" y="372.500"/><use href="#tag" x="555.500" y="388.500"/><use href="#tag" x="555.500" y="404.500"/><use href="#tag" x="555.500" y="420.500"/>
          <use href="#tag" x="1411.500" y="356.500"/><use href="#tag-s" x="1411.500" y="372.500"/><use href="#tag-w" x="1411.500" y="388.500"/>
          <use href="#tag-w" x="1411.500" y="428.500"/><use href="#tag-s" x="1411.500" y="444.500"/>
          <use href="#tag-w" x="1651.500" y="252.500"/><use href="#tag-w" x="1651.500" y="268.500"/>
          <g class="pin-no">
            <text x="337" y="263">PIN_90</text>
            <text x="561" y="367">PIN_119</text><text x="561" y="383">PIN_114</text><text x="561" y="399">PIN_113</text><text x="561" y="415">PIN_125</text><text x="561" y="431">PIN_121</text>
            <text x="1417" y="367">PIN_138</text><text x="1417" y="383">PIN_3</text><text x="1417" y="455">PIN_44</text>
          </g>

          <path d="M755.500 164.500h183v42h-183z" class="shape"/><path d="M756 165h182v13h-182z" fill="#c0c0c0"/>
          <path d="M755.500 178.500h183M755.500 192.500h183M755.500 207.500h183M817.500 164.500v42M852.500 164.500v42M755.500 206v7" class="ink"/>
          <g class="param-head"><text x="787" y="176">Parameter</text><text x="836" y="176">Value</text><text x="896" y="176">Type</text></g>
          <g class="pin-no"><text x="757" y="189">BLINK_DIV</text><text x="819" y="189">100</text><text x="854" y="189">Signed Integer</text><text x="757" y="203">SCAN_DIV</text><text x="819" y="203">50</text><text x="854" y="203">Signed Integer</text></g>
        </g>
      </svg>
    </div>
  </section>
</main>
</body>
</html>
```
FILE: styles.css
```
* { box-sizing: border-box; }
html, body { height: 100%; }
body { margin: 0; display: flex; flex-direction: column; overflow: hidden; background: #f0f0f0; color: #000; font: 11px/16px Roboto, Tahoma, sans-serif; }
button, select { font: inherit; color: inherit; margin: 0; padding: 0; border: 0; background: none; border-radius: 0; }
svg { flex: none; display: block; }
.defs { position: absolute; width: 0; height: 0; }
.abc { font: 8px "Liberation Sans", sans-serif; fill: #222; }
.ic { width: 16px; height: 16px; }
.ic.tall { height: 18px; }
.chev { width: 10px; height: 10px; }

.strip { flex: none; height: 8px; display: flex; gap: 0; overflow: hidden; border-bottom: 1px solid #fff; box-shadow: inset 0 -1px #b4b4b4; }
.quickbar { flex: none; height: 25px; display: flex; align-items: center; padding-left: 1px; border-bottom: 1px solid #b0b0b0; }
.tool { flex: none; width: 23px; height: 21px; display: flex; align-items: center; justify-content: center; border: 1px solid transparent; }
.tool.on { background: #c4dff5; border-color: #90c8f6; }

.main { flex: 1; min-height: 0; display: flex; }

.side { flex: none; width: 316px; margin-left: -16px; padding: 2px 5px 0 0; display: flex; flex-direction: column; overflow: hidden; }
.dock-title { flex: none; height: 17px; margin-right: 1px; padding: 0 4px 0 14px; display: flex; align-items: center; justify-content: space-between; border: 1px solid #a0a0a0; }
.dock-icons { display: flex; gap: 4px; }
.dock-icons svg { width: 10px; height: 10px; }

.nav-pane { flex: none; height: 203px; margin: 2px 1px 0 0; display: flex; flex-direction: column; background: #fff; border: 1px solid #dcdcdc; border-bottom: 1px solid #828790; }
.nav-head { flex: none; height: 22px; line-height: 26px; text-align: center; padding-left: 88px; }
.nav-list { flex: 1; margin: 0; padding: 0 1px 0 0; list-style: none; }
.nav-list li { height: 20px; display: flex; align-items: center; padding-top: 2px; border-bottom: 1px solid #d8d8d8; }
.nav-list .dev { margin: 0 6px 0 11px; }
.nav-list .top-row { padding-top: 0; padding-left: 13px; gap: 5px; }
.picked { flex: 1; height: 19px; display: flex; align-items: center; gap: 6px; padding-top: 1px; padding-left: 3px; background: #cce8ff; border: 1px solid #99d1ff; border-right: 0; }
.nav-list .leaf { padding-left: 51px; gap: 6px; }

.hscroll { flex: none; height: 15px; display: flex; align-items: center; background: #f0f0f0; }
.hscroll svg, .vscroll svg { width: 10px; height: 10px; }
.thumb { display: flex; align-items: center; justify-content: center; background: #cdcdcd; }
.thumb b { width: 10px; height: 9px; background: #f0f0f0; }
.hscroll .thumb { height: 15px; }
.hscroll .end { margin-left: auto; margin-right: 4px; }
.nav-scroll { padding-left: 11px; margin-right: 1px; }
.nav-scroll .thumb { width: 56px; margin-left: 4px; }

.nav-tabs { flex: none; height: 24px; margin: 2px -1px 7px 0; display: flex; align-items: flex-start; }
.nav-tab { flex: none; height: 22px; display: flex; align-items: center; gap: 4px; border: 1px solid #d9d9d9; border-left: 0; }
.nav-tab.current { width: 99px; height: 24px; padding-left: 19px; background: #fff; border-top: 0; }
.nav-tab.files { width: 64px; padding-left: 10px; }
.nav-tab.units { width: 103px; padding-left: 12px; }
.nav-tab.cut { flex: 1; justify-content: flex-end; border-right: 0; }
.nudge { flex: none; width: 16px; height: 24px; display: flex; align-items: center; justify-content: center; border: 1px solid; border-color: #fff #696969 #696969 #fff; }

.flow-row { flex: none; height: 23px; margin: 6px 0; display: flex; align-items: center; padding-left: 8px; }
.flow-row label { width: 32px; text-align: right; padding-right: 7px; flex: none; }
.combo { flex: 1; position: relative; height: 22px; }
.combo select { width: 100%; height: 22px; appearance: none; padding: 0 20px 0 3px; background: #e1e1e1; border: 1px solid #adadad; }
.combo svg { position: absolute; right: 5px; top: 9px; }
.customize { flex: none; width: 73px; height: 21px; margin-left: 7px; background: #e1e1e1; border: 1px solid #adadad; }

.task-pane { flex: none; height: 230px; margin-bottom: 6px; display: grid; grid-template-columns: minmax(0, 1fr) 16px; grid-template-rows: 211px 2px 15px; background: #fff; border: 1px solid #828790; }
.task-view { grid-area: 1 / 1; overflow: hidden; padding-right: 1px; }
table { border-collapse: separate; border-spacing: 0; table-layout: fixed; width: 100%; }
th { font-weight: normal; }
th, td { padding: 0; white-space: nowrap; overflow: hidden; text-align: left; }
.tasks th { height: 24px; text-align: center; }
.tasks td { height: 20px; border-bottom: 1px solid #d8d8d8; }
.tasks .mark { width: 47px; padding-left: 10px; border-right: 1px solid #d8d8d8; }
.task { display: flex; align-items: center; padding-top: 2px; padding-left: 5px; gap: 5px; height: 19px; }
.task .chev { margin-right: 4px; }
.task.sub { padding-left: 25px; }
.task.edit { padding-left: 24px; }
.done { color: #008000; }
.vscroll { grid-area: 1 / 2 / 4 / 3; display: flex; flex-direction: column; align-items: center; padding-top: 4px; background: #f0f0f0; }
.vscroll .thumb { width: 15px; height: 122px; margin-top: 3px; }
.vscroll .end { margin-top: auto; margin-bottom: 20px; }
.task-scroll { grid-area: 3 / 1; padding-left: 11px; }
.task-scroll .thumb { width: 180px; margin-left: 3px; }

.status-pane { flex: 1; min-height: 64px; margin-top: 2px; overflow: hidden; background: #fff; border: 1px solid #828790; border-bottom: 0; }
.status th { height: 24px; text-align: center; border-right: 1px solid #e4e4e4; }
.status th div { display: flex; align-items: center; }
.status .module { width: 162px; padding-left: 8px; }
.status .progress { width: 100px; }
.status th.progress div { gap: 20px; padding-left: 6px; }
.status th.time div { padding-left: 6px; }
.status td { height: 17px; line-height: 16px; padding-left: 10px; border-bottom: 1px solid #d8d8d8; border-right: 1px solid #e4e4e4; }
.status td:last-child { padding-left: 2px; border-right: 0; }
.status td.inner { padding-left: 30px; }
.status td.progress { padding: 0; }
.bar { height: 16px; line-height: 14px; margin: 0 1px; border: 1px solid #909090; border-radius: 3px; background: #000080; box-shadow: inset 0 0 0 1px #fff; color: #fff; text-align: center; font-size: 12px; font-weight: bold; }

.work { flex: 1; min-width: 0; display: flex; flex-direction: column; }
.doc-tabs { flex: none; height: 24px; display: flex; align-items: flex-end; padding-left: 2px; }
.doc-tab { flex: 0 1 534px; height: 22px; display: flex; align-items: center; justify-content: space-between; padding: 0 13px 0 9px; border: 1px solid #d0d0d0; border-right: 0; border-bottom-color: #a0a0a0; }
.doc-tab.active { flex-basis: 537px; height: 24px; padding-left: 12px; background: #fff; border-bottom-color: #fff; border-right: 1px solid #d0d0d0; }
.doc-rest { flex: 1; border-bottom: 1px solid #a0a0a0; }
.doc-ic { width: 18px; height: 18px; }
.close { width: 14px; height: 14px; background: #b4b4b4; border: 1px solid #8c8c8c; border-radius: 2px; }
.close svg { width: 12px; height: 12px; }
.active .close { background: #e07a50; border-color: #c8402c; }

.editbar { flex: none; height: 27px; display: flex; align-items: center; border-bottom: 2px solid #8c8f98; }
.grip { flex: none; width: 9px; height: 18px; background: radial-gradient(circle at 4px 2px, #b4b4b4 1px, transparent 2px) 0 0 / 9px 5px; }
.sep { flex: none; width: 6px; height: 16px; background: linear-gradient(#c8c8c8, #c8c8c8) center / 1px 100% no-repeat; }
.divider { flex: none; width: 3px; align-self: stretch; border-right: 1px solid #a0a0a0; }
.glyph { font: bold 18px/20px "Liberation Sans", sans-serif; color: #3458b4; }
.more { flex: none; width: 12px; display: flex; justify-content: center; }

.canvas { flex: 1; min-height: 0; overflow: hidden; background: #fff; border-left: 1px solid #828790; }
.schematic { width: 100%; height: 100%; font: 10px "Liberation Sans", Arial, sans-serif; shape-rendering: crispEdges; }
.bound path { fill: #fff; stroke: #008080; stroke-dasharray: 1 2; }
.wire { fill: none; stroke: #800080; }
.bus { stroke-width: 3; }
.joint { fill: #800080; }
.box path, .shape { fill: #fff; stroke: #000; }
.ink { fill: none; stroke: #000; }
.port-in { fill: none; stroke: #0080ff; }
.port-out { fill: none; stroke: #8000ff; }
.tiny { font-size: 8px; fill: #800080; }
.vcc { fill: #0000ff; }
.name { fill: #800080; }
.port { fill: #0000ff; }
.right { text-anchor: end; }
.param-head { font-size: 12px; font-weight: bold; text-anchor: middle; }
```
